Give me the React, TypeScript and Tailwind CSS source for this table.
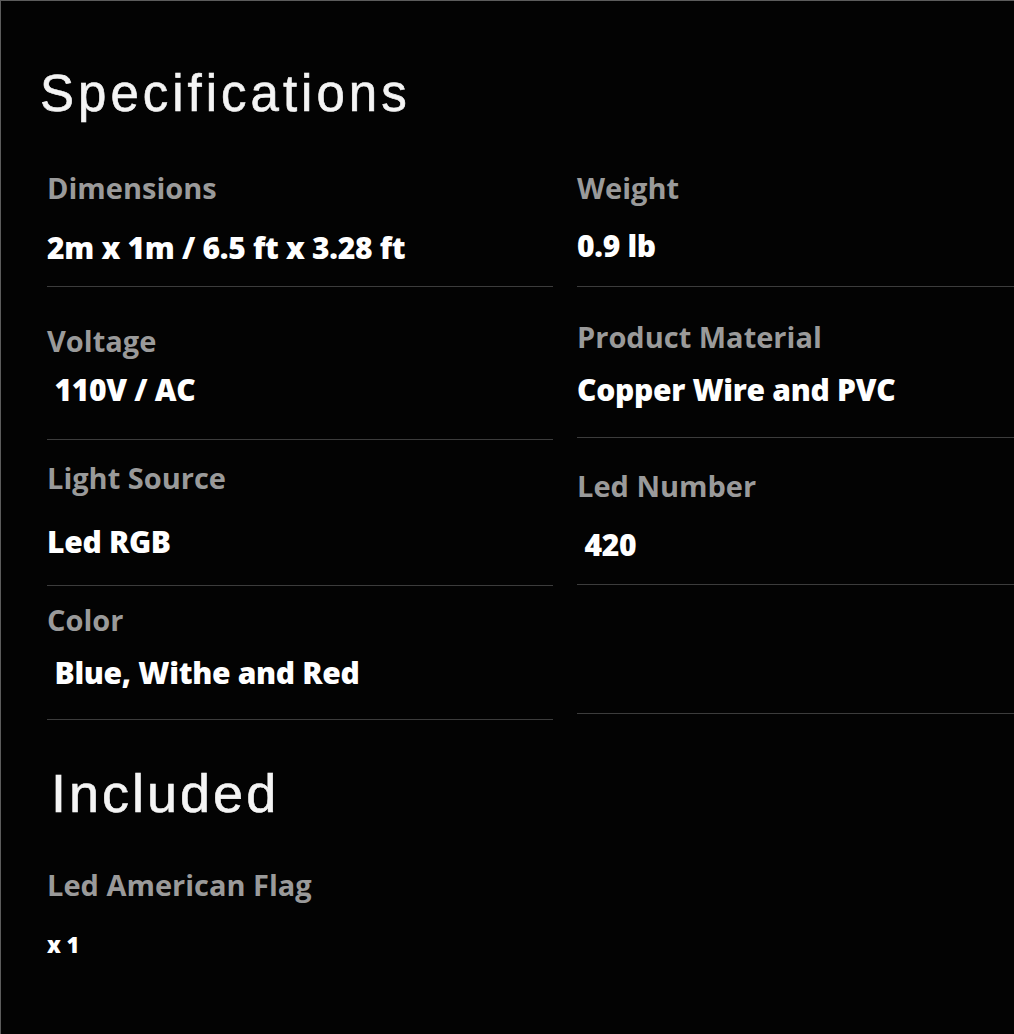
const specsLeft = [
  { label: "Dimensions", value: "2m x 1m / 6.5 ft x 3.28 ft", box: "h-[122px]", lt: "mt-[8px]", vt: "mt-[28px]" },
  { label: "Voltage", value: " 110V / AC", box: "h-[153px]", lt: "mt-[39px]", vt: "mt-[17px]" },
  { label: "Light Source", value: "Led RGB", box: "h-[146px]", lt: "mt-[23px]", vt: "mt-[32px]" },
  { label: "Color", value: " Blue, Withe and Red", box: "h-[134px]", lt: "mt-[19px]", vt: "mt-[21px]" },
]

const specsRight = [
  { label: "Weight", value: "0.9 lb", box: "h-[122px]", lt: "mt-[8px]", vt: "mt-[26px]" },
  { label: "Product Material", value: "Copper Wire and PVC", box: "h-[151px]", lt: "mt-[35px]", vt: "mt-[21px]" },
  { label: "Led Number", value: " 420", box: "h-[147px]", lt: "mt-[33px]", vt: "mt-[27px]" },
  { label: "", value: "", box: "h-[129px]", lt: "", vt: "" },
]

type Spec = (typeof specsLeft)[number]

function SpecItem({ spec }: { spec: Spec }) {
  return (
    <div className={`flex flex-col border-b border-[#3c3c3c] ${spec.box}`}>
      {spec.label && (
        <p className={`text-[29px] leading-[30px] font-bold text-[#9a9a9a] ${spec.lt}`}>
          {spec.label}
        </p>
      )}
      {spec.value && (
        <p className={`text-[30px] leading-[34px] font-extrabold tracking-[-0.3px] text-white whitespace-pre ${spec.vt}`}>
          {spec.value}
        </p>
      )}
    </div>
  )
}

export default function App() {
  return (
    <div className="h-[1034px] w-full overflow-hidden bg-[#030303] border-t border-l border-[#5c5c5c] font-['Open_Sans',sans-serif]">
      <div className="pt-[63px] pl-[46px]">
        {/* Specifications */}
        <h1 className="-ml-[7px] text-[51px] leading-[60px] tracking-[4px] text-[#f4f4f4] font-['Liberation_Sans',Arial,sans-serif] [-webkit-text-stroke:0.6px_#f4f4f4]">
          Specifications
        </h1>

        <div className="mt-[41px] grid grid-cols-[506px_1fr] gap-x-[24px]">
          <div className="flex flex-col">
            {specsLeft.map((s) => (
              <SpecItem key={s.label} spec={s} />
            ))}
          </div>
          <div className="flex flex-col">
            {specsRight.map((s, i) => (
              <SpecItem key={i} spec={s} />
            ))}
          </div>
        </div>

        {/* Included */}
        <h2 className="mt-[42px] ml-[4px] text-[54px] leading-[62px] tracking-[3px] text-[#f4f4f4] font-['Liberation_Sans',Arial,sans-serif] [-webkit-text-stroke:0.6px_#f4f4f4]">
          Included
        </h2>
        <p className="mt-[46px] text-[29px] leading-[30px] font-bold text-[#9a9a9a]">Led American Flag</p>
        <p className="mt-[31px] text-[22px] leading-[26px] font-extrabold text-white">x 1</p>
      </div>
    </div>
  )
}
